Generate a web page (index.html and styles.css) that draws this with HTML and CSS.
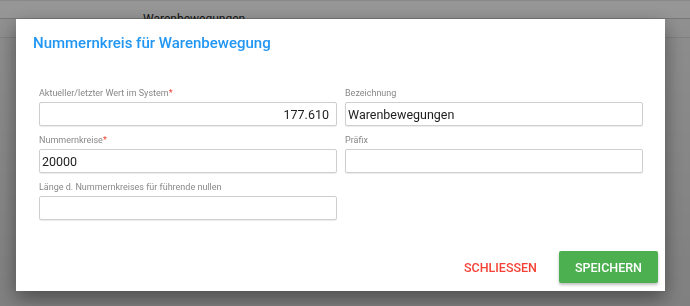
FILE: index.html
```html
<!DOCTYPE html>
<html lang="de">
<head>
    <meta charset="UTF-8">
    <title>Nummernkreis für Warenbewegung</title>
    <link rel="stylesheet" href="styles.css">
</head>
<body>
    <div class="page">
        <div class="topbar">
            <span class="tab">Warenbewegungen</span>
        </div>
        <div class="tabs"></div>
        <div class="content"></div>
    </div>

    <div class="overlay">
        <div class="dialog">
            <h2 class="dialog-title">Nummernkreis für Warenbewegung</h2>
            <div class="form-grid">
                <div class="field">
                    <label>Aktueller/letzter Wert im System<span class="req">*</span></label>
                    <input type="text" class="num" value="177.610">
                </div>
                <div class="field">
                    <label>Bezeichnung</label>
                    <input type="text" value="Warenbewegungen">
                </div>
                <div class="field">
                    <label>Nummernkreise<span class="req">*</span></label>
                    <input type="text" value="20000">
                </div>
                <div class="field">
                    <label>Präfix</label>
                    <input type="text" value="">
                </div>
                <div class="field">
                    <label>Länge d. Nummernkreises für führende nullen</label>
                    <input type="text" value="">
                </div>
            </div>
            <div class="dialog-actions">
                <button class="btn-flat">SCHLIESSEN</button>
                <button class="btn-raised">SPEICHERN</button>
            </div>
        </div>
    </div>
</body>
</html>
```

FILE: styles.css
```css
html, body {
    margin: 0;
    height: 100%;
}
body {
    font-family: Roboto, "Liberation Sans", sans-serif;
    background-color: #ececec;
    overflow: hidden;
}
.page {
    height: 100%;
}
.topbar {
    height: 17px;
    background-color: #fafafa;
    border-top: 1px solid #e4e4e4;
    border-bottom: 1px solid #c8c8c8;
    padding-left: 143px;
    box-sizing: content-box;
}
.tab {
    display: inline-block;
    font-size: 12px;
    color: #222;
    line-height: 12px;
    padding-top: 12px;
}
.tabs {
    height: 18px;
    border-bottom: 1px solid #d8d8d8;
    background-color: #f0f0f0;
}
.overlay {
    position: fixed;
    inset: 0;
    background: linear-gradient(to bottom, rgba(0, 0, 0, 0.4), rgba(0, 0, 0, 0.46));
}
.dialog {
    position: absolute;
    left: 16px;
    top: 19px;
    width: 649px;
    height: 272px;
    background-color: #fff;
    box-shadow: 0 8px 17px rgba(0, 0, 0, 0.25), 0 6px 20px rgba(0, 0, 0, 0.2);
    box-sizing: border-box;
    display: flex;
    flex-direction: column;
}
.dialog-title {
    margin: 0;
    padding: 15px 0 0 17px;
    font-size: 15px;
    font-weight: 500;
    color: #2196f3;
    line-height: 18px;
}
.form-grid {
    display: grid;
    grid-template-columns: 298px 298px;
    column-gap: 8px;
    row-gap: 9px;
    padding: 36px 22px 0 23px;
}
.field {
    display: flex;
    flex-direction: column;
}
.field label {
    font-size: 9px;
    color: #888;
    line-height: 11px;
    height: 14px;
}
.req {
    color: #f44336;
}
.field input {
    height: 24px;
    box-sizing: border-box;
    border: 1px solid #cfcfcf;
    border-radius: 2px;
    padding: 0 7px 0 2px;
    font-family: Roboto, "Liberation Sans", sans-serif;
    font-size: 12.5px;
    color: #1e1e1e;
    box-shadow: 0 1px 1px rgba(0, 0, 0, 0.08);
    outline: none;
}
.field input.num {
    text-align: right;
}
.dialog-actions {
    margin-top: auto;
    display: flex;
    justify-content: flex-end;
    align-items: center;
    gap: 22px;
    padding: 0 7px 8px 0;
}
.btn-flat, .btn-raised {
    font-family: Roboto, "Liberation Sans", sans-serif;
    font-size: 12.5px;
    font-weight: 500;
    border: none;
    cursor: pointer;
    height: 32px;
    border-radius: 2px;
}
.btn-flat {
    background: none;
    color: #f44336;
    padding: 0 0 0 3px;
}
.btn-raised {
    background-color: #4caf50;
    color: #fff;
    width: 99px;
    box-shadow: 0 2px 3px rgba(0, 0, 0, 0.25);
}
```
